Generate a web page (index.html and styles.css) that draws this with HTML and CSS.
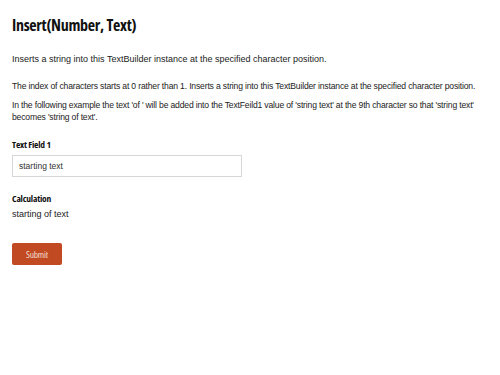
FILE: index.html
```html
<!DOCTYPE html>
<html>
<head>
<meta charset="utf-8">
<link rel="stylesheet" href="styles.css">
</head>
<body>
<div class="page">
  <h1 class="title">Insert(Number, Text)</h1>
  <p class="lead">Inserts a string into this TextBuilder instance at the specified character position.</p>
  <p class="para">The index of characters starts at 0 rather than 1. Inserts a string into this TextBuilder instance at the specified character position.</p>
  <p class="para">In the following example the text 'of ' will be added into the TextFeild1 value of 'string text' at the 9th character so that 'string text' becomes 'string of text'.</p>
  <div class="field">
    <label class="label">Text Field 1</label>
    <input class="input" type="text" value="starting text">
  </div>
  <div class="field calc">
    <div class="label">Calculation</div>
    <div class="result">starting of text</div>
  </div>
  <button class="btn">Submit</button>
</div>
</body>
</html>
```
FILE: styles.css
```css
html, body { margin: 0; padding: 0; background: #fff; }
.page {
  padding: 0 12px;
  font-family: "Liberation Sans", Arial, sans-serif;
  font-size: 9px;
  color: #222;
}
.title {
  font-family: "Open Sans", sans-serif;
  font-stretch: condensed;
  font-weight: 700;
  font-size: 16px;
  letter-spacing: -0.3px;
  color: #111;
  margin: 0;
  padding-top: 15px;
  line-height: 20px;
}
.lead { margin: 18px 0 0; line-height: 12px; }
.para { margin: 15px 0 0; line-height: 12px; font-size: 8.6px; letter-spacing: -0.17px; }
.para + .para { margin-top: 7px; }
.field { margin-top: 16px; display: flex; flex-direction: column; }
.label {
  font-family: "Open Sans", sans-serif;
  font-stretch: condensed;
  font-weight: 700;
  font-size: 9.5px;
  letter-spacing: -0.2px;
  color: #111;
  line-height: 12px;
}
.input {
  margin: 4px 0 0;
  width: 230px;
  height: 22px;
  box-sizing: border-box;
  border: 1px solid #d6d6d6;
  padding: 0 6px;
  font-family: "Liberation Sans", Arial, sans-serif;
  font-size: 8.5px;
  color: #333;
  outline: none;
}
.calc { margin-top: 16px; }
.result { margin-top: 3px; font-size: 9px; color: #222; line-height: 12px; }
.btn {
  display: block;
  margin-top: 23px;
  width: 50px;
  height: 22px;
  background: #c24a22;
  border: none;
  border-radius: 2px;
  color: #f3dccf;
  font-family: "Open Sans", sans-serif;
  font-stretch: condensed;
  font-size: 9.5px;
  letter-spacing: -0.2px;
  padding: 0;
}
```
